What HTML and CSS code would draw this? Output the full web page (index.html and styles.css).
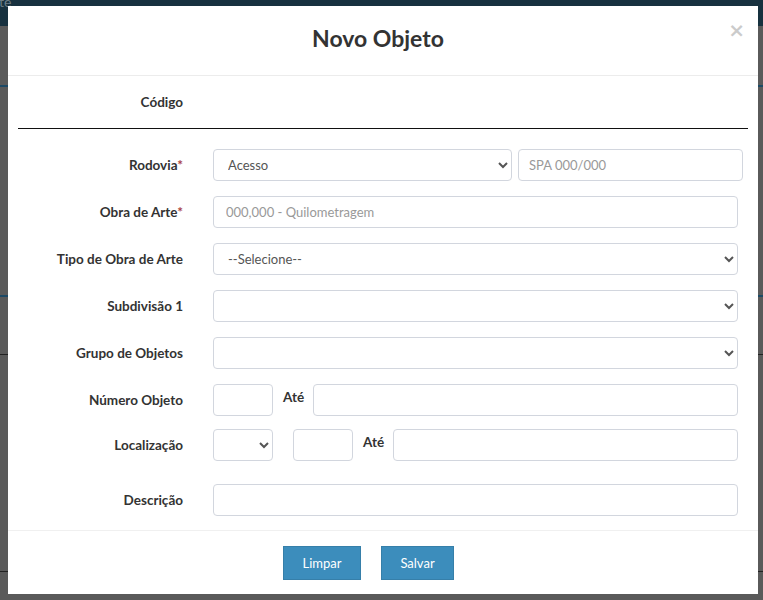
FILE: index.html
```html
<!DOCTYPE html>
<html lang="pt">
<head>
<meta charset="utf-8">
<title>Novo Objeto</title>
<link rel="stylesheet" href="styles.css">
</head>
<body>
<div class="page">
  <div class="page-top"><span class="page-top-text">rte</span></div>
  <div class="page-line l1"></div>
  <div class="page-line l2"></div>
  <div class="page-line l3"></div>
  <div class="page-line l4"></div>
</div>

<div class="modal">
  <div class="modal-header">
    <h4 class="modal-title">Novo Objeto</h4>
    <span class="close">×</span>
  </div>
  <div class="modal-body">
    <div class="code-row">
      <label class="lbl">Código</label>
    </div>
    <hr class="sep">

    <div class="row r-first">
      <label class="lbl">Rodovia<span class="req">*</span></label>
      <div class="ctrls">
        <select class="fc sel-rodovia"><option>Acesso</option></select>
        <input class="fc inp-spa" type="text" placeholder="SPA 000/000">
      </div>
    </div>

    <div class="row">
      <label class="lbl">Obra de Arte<span class="req">*</span></label>
      <div class="ctrls">
        <input class="fc grow" type="text" placeholder="000,000 - Quilometragem">
      </div>
    </div>

    <div class="row">
      <label class="lbl">Tipo de Obra de Arte</label>
      <div class="ctrls">
        <select class="fc grow"><option>--Selecione--</option></select>
      </div>
    </div>

    <div class="row">
      <label class="lbl">Subdivisão 1</label>
      <div class="ctrls">
        <select class="fc grow"><option></option></select>
      </div>
    </div>

    <div class="row">
      <label class="lbl">Grupo de Objetos</label>
      <div class="ctrls">
        <select class="fc grow"><option></option></select>
      </div>
    </div>

    <div class="row">
      <label class="lbl">Número Objeto</label>
      <div class="ctrls">
        <input class="fc small" type="text">
        <span class="ate">Até</span>
        <input class="fc grow" type="text">
      </div>
    </div>

    <div class="row r-loc">
      <label class="lbl">Localização</label>
      <div class="ctrls">
        <select class="fc small"><option></option></select>
        <input class="fc small ml20" type="text">
        <span class="ate">Até</span>
        <input class="fc grow" type="text">
      </div>
    </div>

    <div class="row r-desc">
      <label class="lbl">Descrição</label>
      <div class="ctrls">
        <input class="fc grow" type="text">
      </div>
    </div>
  </div>
  <div class="modal-footer">
    <button class="btn btn-limpar">Limpar</button>
    <button class="btn btn-salvar">Salvar</button>
  </div>
</div>
</body>
</html>
```

FILE: styles.css
```css
* { box-sizing: border-box; }
html, body { margin: 0; padding: 0; }
body {
  width: 763px;
  height: 600px;
  overflow: hidden;
  background: #5a5a5a;
  font-family: Lato, "Open Sans", sans-serif;
  position: relative;
}
.page { position: absolute; inset: 0; }
.page-top {
  height: 26px;
  background: #17313f;
}
.page-top-text {
  color: #6b7c86;
  font-size: 14px;
  position: relative;
  top: -9px;
  left: -6px;
}
.page-line { position: absolute; left: 0; right: 0; height: 1px; }
.l1 { top: 85px; height: 2px; background: #1d4a66; }
.l2 { top: 295px; height: 2px; background: #1d4a66; }
.l3 { top: 354px; background: #222; }
.l4 { top: 571px; background: #222; }

.modal {
  position: absolute;
  left: 8px;
  top: 6px;
  width: 750px;
  background: #fff;
  display: flex;
  flex-direction: column;
}
.modal-header {
  flex: none;
  height: 70px;
  border-bottom: 1px solid #ececec;
  display: flex;
  align-items: center;
  justify-content: center;
  position: relative;
}
.modal-title {
  margin: 0;
  font-size: 23px;
  font-weight: 700;
  color: #333;
  padding-bottom: 6px;
  padding-right: 10px;
}
.close {
  position: absolute;
  right: 13px;
  top: 14px;
  font-size: 20px;
  font-weight: 700;
  color: #000;
  opacity: .2;
  line-height: 1;
  font-family: "DejaVu Sans", sans-serif;
}
.modal-body {
  flex: none;
  padding: 0 10px;
  display: flow-root;
}
.code-row {
  height: 52px;
  display: flex;
  align-items: center;
}
.sep {
  margin: 0 0 20px;
  border: 0;
  border-top: 1px solid #111;
}
.lbl {
  width: 165px;
  flex: none;
  text-align: right;
  font-weight: 700;
  font-size: 13.5px;
  color: #333;
}
.req { color: #a94442; }
.row {
  display: flex;
  align-items: center;
  margin-bottom: 15px;
}
.row.r-loc { margin-top: -2px; }
.row.r-desc { margin-top: 23px; margin-bottom: 14px; }
.ctrls {
  margin-left: 30px;
  width: 525px;
  display: flex;
  align-items: center;
}
.fc {
  height: 32px;
  border: 1px solid #d2d6de;
  border-radius: 4px;
  background: #fff;
  font-family: Lato, "Open Sans", sans-serif;
  font-size: 13px;
  color: #555;
  padding: 0 12px;
  outline: none;
}
.fc::placeholder { color: #999; }
select.fc { padding: 0 10px; }
.sel-rodovia { width: 299px; flex: none; }
.inp-spa { width: 225px; flex: none; margin-left: 6px; margin-right: -5px; padding-left: 10px; }
.grow { flex: 1; min-width: 0; }
.small { width: 60px; flex: none; }
.ml20 { margin-left: 20px; }
.ate {
  font-weight: 700;
  font-size: 13.5px;
  color: #333;
  width: 40px;
  flex: none;
  padding-left: 10px;
  align-self: flex-start;
  padding-top: 5px;
}
.modal-footer {
  flex: none;
  height: 64px;
  border-top: 1px solid #f0f0f0;
  display: flex;
  align-items: center;
  padding-left: 275px;
  gap: 20px;
}
.btn {
  height: 34px;
  background: #3c8dbc;
  border: 1px solid #367fa9;
  color: #fff;
  font-family: Lato, "Open Sans", sans-serif;
  font-size: 13px;
  border-radius: 0;
  padding: 0;
}
.btn-limpar { width: 78px; }
.btn-salvar { width: 73px; }
```
